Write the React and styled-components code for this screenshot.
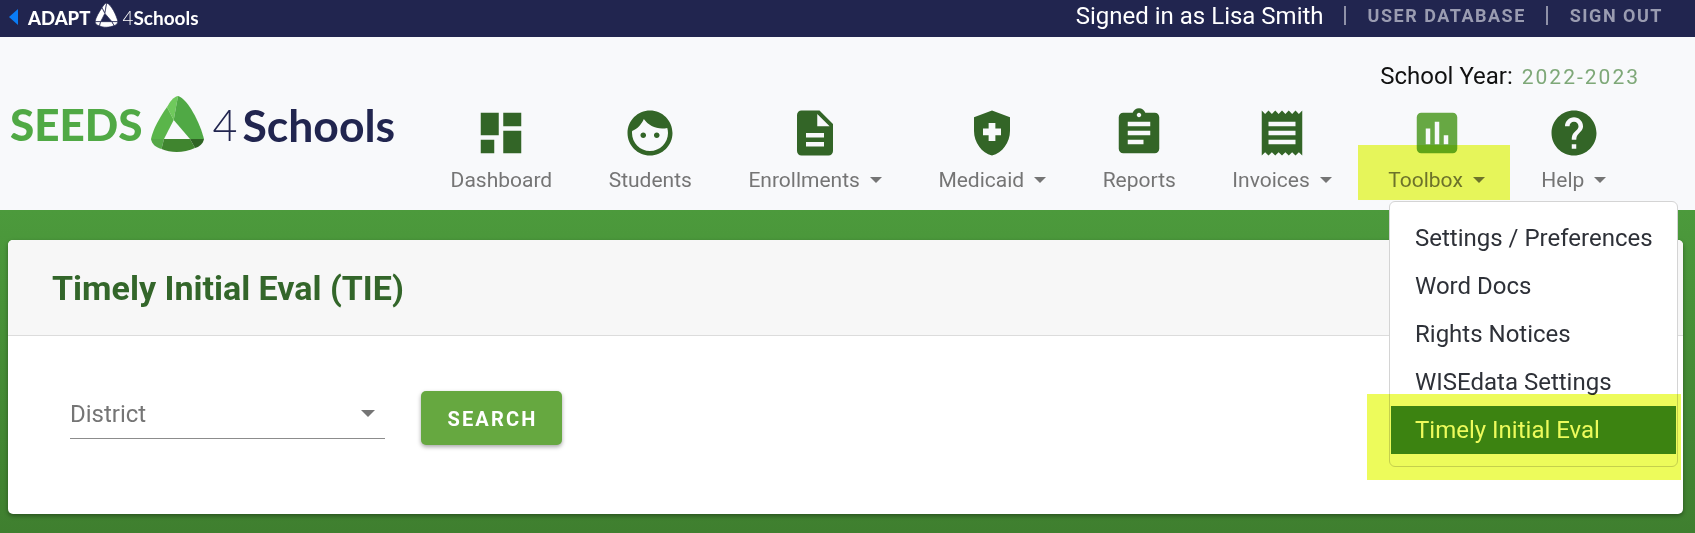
import React from "react";
import styled, { createGlobalStyle } from "styled-components";

const GlobalStyle = createGlobalStyle`
  html, body { margin: 0; padding: 0; }
  body {
    width: 1695px;
    height: 533px;
    overflow: hidden;
    font-family: Roboto, "Liberation Sans", sans-serif;
    background: #f8f9fb;
  }
`;

const Page = styled.div`
  position: relative;
  width: 1695px;
  height: 533px;
  overflow: hidden;
`;

const TopBar = styled.div`
  display: flex;
  align-items: center;
  justify-content: space-between;
  height: 37px;
  padding: 0 32px 6px 9px;
  box-sizing: border-box;
  background: #21254f;
`;

const BackLink = styled.div`
  display: flex;
  align-items: center;
  color: #fff;
  font-family: Lato, sans-serif;
`;

const BackArrow = styled.span`
  width: 0;
  height: 0;
  margin: 4px 10px 0 0;
  border-top: 8px solid transparent;
  border-bottom: 8px solid transparent;
  border-right: 9px solid #0a7cf5;
`;

const SmallWord = styled.span`
  font-size: ${props => props.size}px;
  font-weight: ${props => props.weight};
  line-height: 1;
  margin-top: 5px;
`;

const UserArea = styled.div`
  display: flex;
  align-items: center;
`;

const UserName = styled.span`
  font-size: 24px;
  color: #fff;
`;

const Divider = styled.span`
  width: 2px;
  height: 19px;
  margin: 0 22px 0 20px;
  background: #8f91a8;
`;

const TopLink = styled.span`
  font-size: 18px;
  font-weight: 700;
  letter-spacing: 1.5px;
  color: #9a9cb1;
`;

const Header = styled.header`
  display: flex;
  height: 173px;
  background: #f8f9fb;
`;

const Logo = styled.div`
  display: flex;
  align-items: center;
  height: 52px;
  margin: 61px 55.5px 0 10px;
  font-family: Lato, sans-serif;
`;

const LogoSeeds = styled.span`
  font-size: 44px;
  font-weight: 900;
  color: #50a945;
`;

const LogoFour = styled.span`
  font-size: 43px;
  font-weight: 300;
  color: #21254f;
  margin-right: 5px;
`;

const LogoSchools = styled.span`
  font-size: 44.5px;
  font-weight: 700;
  color: #21254f;
`;

const HeaderRight = styled.div`
  flex: 1;
  display: flex;
  flex-direction: column;
`;

const SchoolYear = styled.div`
  align-self: flex-end;
  margin: 26px 55px 0 0;
  font-size: 24px;
  line-height: 26px;
  color: #111;
`;

const YearValue = styled.span`
  margin-left: 9px;
  font-size: 21px;
  letter-spacing: 2px;
  color: #7ea878;
`;

const Nav = styled.nav`
  display: flex;
  gap: 56.5px;
  margin-top: 16px;
`;

const NavItem = styled.div`
  display: flex;
  flex-direction: column;
  align-items: center;
`;

const NavIcon = styled.svg`
  display: block;
  width: 54px;
  height: 54px;
  fill: ${props => (props.$active ? "#67a843" : "#336527")};
`;

const NavLabel = styled.div`
  display: flex;
  align-items: center;
  margin-top: 7px;
  font-size: 21px;
  line-height: 26px;
  color: #757575;
`;

const Caret = styled.span`
  width: 0;
  height: 0;
  margin-left: 10px;
  border-left: 6.5px solid transparent;
  border-right: 6.5px solid transparent;
  border-top: 6.5px solid #757575;
`;

const Main = styled.main`
  height: 323px;
  padding: 30px 12px 0 8px;
  box-sizing: border-box;
  background: linear-gradient(180deg, #4c9a3c 0%, #3f7f2f 100%);
`;

const Card = styled.section`
  height: 274px;
  border-radius: 5px;
  background: #fff;
  box-shadow: 0 2px 4px rgba(0, 0, 0, 0.35);
  overflow: hidden;
`;

const CardHead = styled.div`
  display: flex;
  align-items: center;
  height: 95px;
  padding-left: 44px;
  background: #f7f7f7;
  border-bottom: 1px solid #dcdcdc;
`;

const CardTitle = styled.h1`
  margin: 0;
  font-size: 34px;
  font-weight: 700;
  color: #33662a;
`;

const SearchRow = styled.div`
  display: flex;
  align-items: flex-start;
  gap: 36px;
  padding: 55px 0 0 62px;
`;

const Select = styled.div`
  display: flex;
  align-items: center;
  justify-content: space-between;
  width: 315px;
  height: 48px;
  padding: 0 10px 2px 0;
  box-sizing: border-box;
  border-bottom: 1px solid #8c8c8c;
  font-size: 24px;
  color: #757575;
`;

const SelectCaret = styled.span`
  width: 0;
  height: 0;
  border-left: 7px solid transparent;
  border-right: 7px solid transparent;
  border-top: 7px solid #757575;
`;

const SearchButton = styled.button`
  width: 141px;
  height: 54px;
  padding: 2px 0 0 2px;
  border: 0;
  border-radius: 5px;
  background: #66a840;
  box-shadow: 0 2px 4px rgba(0, 0, 0, 0.35);
  color: #fff;
  font-family: Roboto, sans-serif;
  font-size: 20px;
  font-weight: 700;
  letter-spacing: 2.2px;
`;

const Menu = styled.ul`
  position: absolute;
  left: 1389px;
  top: 201px;
  width: 289px;
  margin: 0;
  padding: 12px 1px;
  box-sizing: border-box;
  list-style: none;
  background: #fff;
  border: 1px solid #d4d4d4;
  border-radius: 6px;
`;

const MenuItem = styled.li`
  height: 48px;
  padding-left: 24px;
  font-size: 24px;
  line-height: 49px;
  color: ${props => (props.$selected ? "#fff" : "#2e3138")};
  background: ${props => (props.$selected ? "#40852f" : "transparent")};
`;

const Highlight = styled.div`
  position: absolute;
  left: ${props => props.x}px;
  top: ${props => props.y}px;
  width: ${props => props.w}px;
  height: ${props => props.h}px;
  background: #edfb5b;
  mix-blend-mode: multiply;
`;

const SeedSvg = styled.svg`
  flex: none;
  margin: ${props => props.$gap};
`;

const icons = {
  dashboard: "M3 13h8V3H3v10zm0 8h6v-6H3v6zm10 0h8V11h-8v10zm0-18v6h8V3h-8z",
  face: "M9 11.75c-.69 0-1.25.56-1.25 1.25s.56 1.25 1.25 1.25 1.25-.56 1.25-1.25-.56-1.25-1.25-1.25zm6 0c-.69 0-1.25.56-1.25 1.25s.56 1.25 1.25 1.25 1.25-.56 1.25-1.25-.56-1.25-1.25-1.25zM12 2C6.48 2 2 6.48 2 12s4.48 10 10 10 10-4.48 10-10S17.52 2 12 2zm0 18c-4.41 0-8-3.59-8-8 0-.29.02-.58.05-.86 2.36-1.05 4.23-2.98 5.21-5.37C11.07 8.33 14.05 10 17.42 10c.78 0 1.53-.09 2.25-.26.21.71.33 1.47.33 2.26 0 4.41-3.59 8-8 8z",
  description: "M14 2H6c-1.1 0-1.99.9-1.99 2L4 20c0 1.1.89 2 1.99 2H18c1.1 0 2-.9 2-2V8l-6-6zm2 16H8v-2h8v2zm0-4H8v-2h8v2zm-3-5V3.5L18.5 9H13z",
  shield: "M10.5 13H8v-3h2.5V7.5h3V10H16v3h-2.5v2.5h-3V13zM12 2 4 5v6.09c0 5.05 3.41 9.76 8 10.91 4.59-1.15 8-5.86 8-10.91V5l-8-3z",
  assignment: "M19 3h-4.18C14.4 1.84 13.3 1 12 1c-1.3 0-2.4.84-2.82 2H5c-1.1 0-2 .9-2 2v14c0 1.1.9 2 2 2h14c1.1 0 2-.9 2-2V5c0-1.1-.9-2-2-2zm-7 0c.55 0 1 .45 1 1s-.45 1-1 1-1-.45-1-1 .45-1 1-1zm2 14H7v-2h7v2zm3-4H7v-2h10v2zm0-4H7V7h10v2z",
  receipt: "M18 17H6v-2h12v2zm0-4H6v-2h12v2zm0-4H6V7h12v2zM3 22l1.5-1.5L6 22l1.5-1.5L9 22l1.5-1.5L12 22l1.5-1.5L15 22l1.5-1.5L18 22l1.5-1.5L21 22V2l-1.5 1.5L18 2l-1.5 1.5L15 2l-1.5 1.5L12 2l-1.5 1.5L9 2 7.5 3.5 6 2 4.5 3.5 3 2v20z",
  poll: "M19 3H5c-1.1 0-2 .9-2 2v14c0 1.1.9 2 2 2h14c1.1 0 2-.9 2-2V5c0-1.1-.9-2-2-2zM9 17H7v-7h2v7zm4 0h-2V7h2v10zm4 0h-2v-4h2v4z",
  help: "M12 2C6.48 2 2 6.48 2 12s4.48 10 10 10 10-4.48 10-10S17.52 2 12 2zm1 17h-2v-2h2v2zm2.07-7.75-.9.92C13.45 12.9 13 13.5 13 15h-2v-.5c0-1.1.45-2.1 1.17-2.83l1.24-1.26c.37-.36.59-.86.59-1.41 0-1.1-.9-2-2-2s-2 .9-2 2H8c0-2.21 1.79-4 4-4s4 1.79 4 4c0 .88-.36 1.68-.93 2.25z",
};

const navItems = [
  { label: "Dashboard", icon: "dashboard" },
  { label: "Students", icon: "face" },
  { label: "Enrollments", icon: "description", caret: true },
  { label: "Medicaid", icon: "shield", caret: true },
  { label: "Reports", icon: "assignment" },
  { label: "Invoices", icon: "receipt", caret: true },
  { label: "Toolbox", icon: "poll", caret: true, active: true },
  { label: "Help", icon: "help", caret: true },
];

const menuItems = ["Settings / Preferences", "Word Docs", "Rights Notices", "WISEdata Settings", "Timely Initial Eval"];

const seedParts = [
  { d: "M27 0 C22 1 19 6 16 11 L22.7 24 Z", fill: "#6fc95c" },
  { d: "M27 0 C37 3 49 27 53 43 L39 43 L22.7 24 Z", fill: "#50a945" },
  { d: "M16 11 L22.7 24 L13 43 L0 43 C2 33 9 21 16 11 Z", fill: "#5ab54a" },
  { d: "M0 43 L13 43 L10.5 53 C4 51 1 48 0 43 Z", fill: "#55a847" },
  { d: "M13 43 L39 43 L44 52 C33 57 20 57 10.5 53 Z", fill: "#40852f" },
  { d: "M39 43 L53 43 C52 48 48 51 44 52 Z", fill: "#2f6524" },
];

const Seed = ({ width, gap, mono }) => (
  <SeedSvg width={width} height={width * 56 / 53} viewBox="0 0 53 56" $gap={gap}>
    {seedParts.map(part => (
      <path
        key={part.d}
        d={part.d}
        fill={mono ? "#fff" : part.fill}
        stroke={mono ? "#21254f" : "none"}
        strokeWidth={mono ? 1.6 : 0}
      />
    ))}
  </SeedSvg>
);

export default function App() {
  return (
    <Page>
      <GlobalStyle />
      <TopBar>
        <BackLink>
          <BackArrow />
          <SmallWord size={18.5} weight={900}>ADAPT</SmallWord>
          <Seed width={23} gap="0 4px 0 5px" mono />
          <SmallWord size={19} weight={300}>4</SmallWord>
          <SmallWord size={19} weight={700}>Schools</SmallWord>
        </BackLink>
        <UserArea>
          <UserName>Signed in as Lisa Smith</UserName>
          <Divider />
          <TopLink>USER DATABASE</TopLink>
          <Divider />
          <TopLink>SIGN OUT</TopLink>
        </UserArea>
      </TopBar>
      <Header>
        <Logo>
          <LogoSeeds>SEEDS</LogoSeeds>
          <Seed width={53} gap="0 9px 0 8px" />
          <LogoFour>4</LogoFour>
          <LogoSchools>Schools</LogoSchools>
        </Logo>
        <HeaderRight>
          <SchoolYear>School Year:<YearValue>2022-2023</YearValue></SchoolYear>
          <Nav>
            {navItems.map(item => (
              <NavItem key={item.label}>
                <NavIcon viewBox="0 0 24 24" $active={item.active}><path d={icons[item.icon]} /></NavIcon>
                <NavLabel>{item.label}{item.caret && <Caret />}</NavLabel>
              </NavItem>
            ))}
          </Nav>
        </HeaderRight>
      </Header>
      <Main>
        <Card>
          <CardHead><CardTitle>Timely Initial Eval (TIE)</CardTitle></CardHead>
          <SearchRow>
            <Select>District<SelectCaret /></Select>
            <SearchButton>SEARCH</SearchButton>
          </SearchRow>
        </Card>
      </Main>
      <Menu>
        {menuItems.map(label => (
          <MenuItem key={label} $selected={label === "Timely Initial Eval"}>{label}</MenuItem>
        ))}
      </Menu>
      <Highlight x={1358} y={145} w={152} h={55} />
      <Highlight x={1367} y={394} w={314} h={86} />
    </Page>
  );
}
